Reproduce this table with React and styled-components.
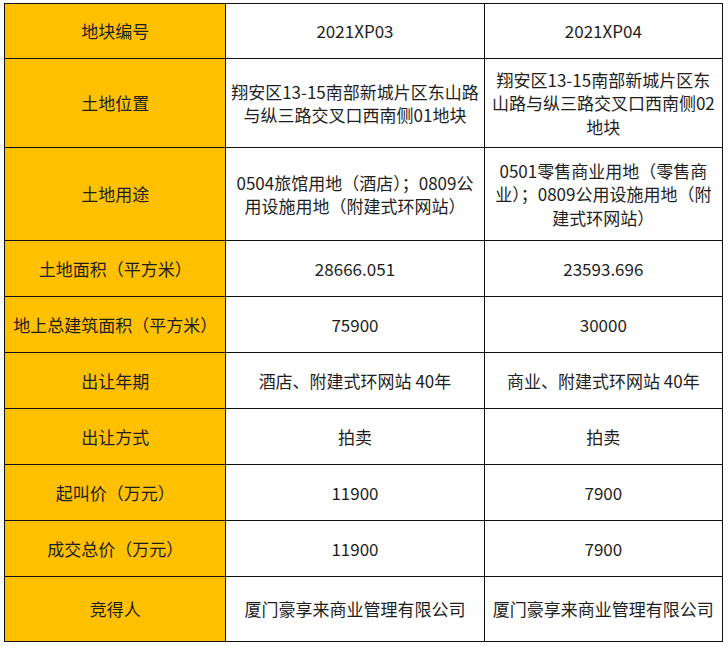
import React from "react";
import styled, { createGlobalStyle } from "styled-components";

const GlobalStyle = createGlobalStyle`
  html, body {
    margin: 0;
    padding: 0;
    background: #ffffff;
  }
  body {
    font-family: "Noto Sans CJK SC", "Noto Sans", sans-serif;
  }
`;

const Page = styled.div`
  width: 728px;
  height: 646px;
  padding: 3px 0 0 4px;
  box-sizing: border-box;
  background: #ffffff;
`;

const Table = styled.table`
  width: 719px;
  border-collapse: collapse;
  table-layout: fixed;
`;

const Col = styled.col`
  width: ${({ w }) => w}px;
`;

const Row = styled.tr`
  height: ${({ h }) => h}px;
`;

const Label = styled.th`
  background: #ffc000;
  border: 1px solid #111;
  font-weight: 400;
  font-size: 17px;
  line-height: 23.5px;
  color: #1e1e1e;
  text-align: center;
  vertical-align: middle;
  padding: 0 4px;
`;

const Cell = styled.td`
  background: #ffffff;
  border: 1px solid #111;
  font-size: 17px;
  line-height: 23.5px;
  color: #1e1e1e;
  text-align: center;
  vertical-align: middle;
  padding: 0 2px;
  white-space: nowrap;
`;

const rows = [
  { h: 55, label: "地块编号", a: ["2021XP03"], b: ["2021XP04"] },
  {
    h: 89,
    label: "土地位置",
    a: ["翔安区13-15南部新城片区东山路", "与纵三路交叉口西南侧01地块"],
    b: ["翔安区13-15南部新城片区东", "山路与纵三路交叉口西南侧02", "地块"],
  },
  {
    h: 93,
    label: "土地用途",
    a: ["0504旅馆用地（酒店）；0809公", "用设施用地（附建式环网站）"],
    b: ["0501零售商业用地（零售商", "业）；0809公用设施用地（附", "建式环网站）"],
  },
  { h: 56, label: "土地面积（平方米）", a: ["28666.051"], b: ["23593.696"] },
  { h: 56, label: "地上总建筑面积（平方米）", a: ["75900"], b: ["30000"] },
  { h: 56, label: "出让年期", a: ["酒店、附建式环网站 40年"], b: ["商业、附建式环网站 40年"] },
  { h: 56, label: "出让方式", a: ["拍卖"], b: ["拍卖"] },
  { h: 56, label: "起叫价（万元）", a: ["11900"], b: ["7900"] },
  { h: 56, label: "成交总价（万元）", a: ["11900"], b: ["7900"] },
  { h: 65, label: "竞得人", a: ["厦门豪享来商业管理有限公司"], b: ["厦门豪享来商业管理有限公司"] },
];

const Lines = ({ lines }) =>
  lines.map((line, i) => (
    <React.Fragment key={i}>
      {i > 0 && <br />}
      {line}
    </React.Fragment>
  ));

const App = () => (
  <Page>
    <GlobalStyle />
    <Table>
      <colgroup>
        <Col w={221} />
        <Col w={258} />
        <Col w={238} />
      </colgroup>
      <tbody>
        {rows.map((r) => (
          <Row key={r.label} h={r.h}>
            <Label>{r.label}</Label>
            <Cell>
              <Lines lines={r.a} />
            </Cell>
            <Cell>
              <Lines lines={r.b} />
            </Cell>
          </Row>
        ))}
      </tbody>
    </Table>
  </Page>
);

export default App;
